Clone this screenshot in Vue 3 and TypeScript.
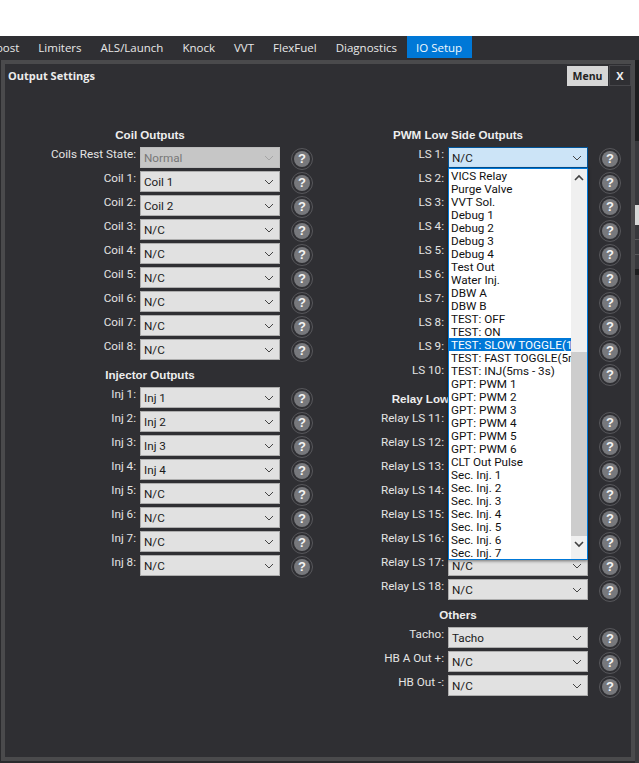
<script setup lang="ts">
import { computed } from 'vue'

interface Row {
  heading?: string
  label?: string
  value?: string
  disabled?: boolean
  open?: boolean
}

const tabs = ['Boost', 'Limiters', 'ALS/Launch', 'Knock', 'VVT', 'FlexFuel', 'Diagnostics', 'IO Setup']

const series = (prefix: string, from: number, to: number, values: string[] = []): Row[] => {
  const rows: Row[] = []
  for (let i = from; i <= to; i++) {
    rows.push({ label: `${prefix} ${i}:`, value: values[i - from] ?? 'N/C' })
  }
  return rows
}

const leftRows: Row[] = [
  { heading: 'Coil Outputs' },
  { label: 'Coils Rest State:', value: 'Normal', disabled: true },
  ...series('Coil', 1, 8, ['Coil 1', 'Coil 2']),
  { heading: 'Injector Outputs' },
  ...series('Inj', 1, 8, ['Inj 1', 'Inj 2', 'Inj 3', 'Inj 4']),
]

const rightRows = computed<Row[]>(() => {
  const ls = series('LS', 1, 10)
  ls[0].open = true
  return [
    { heading: 'PWM Low Side Outputs' },
    ...ls,
    { heading: 'Relay Low Side Outputs' },
    ...series('Relay LS', 11, 18),
    { heading: 'Others' },
    { label: 'Tacho:', value: 'Tacho' },
    { label: 'HB A Out +:', value: 'N/C' },
    { label: 'HB Out -:', value: 'N/C' },
  ]
})

const columns = computed(() => [leftRows, rightRows.value])

const options = [
  'VICS Relay', 'Purge Valve', 'VVT Sol.', 'Debug 1', 'Debug 2', 'Debug 3', 'Debug 4', 'Test Out',
  'Water Inj.', 'DBW A', 'DBW B', 'TEST: OFF', 'TEST: ON', 'TEST: SLOW TOGGLE(1s)', 'TEST: FAST TOGGLE(5ms)',
  'TEST: INJ(5ms - 3s)', 'GPT: PWM 1', 'GPT: PWM 2', 'GPT: PWM 3', 'GPT: PWM 4', 'GPT: PWM 5', 'GPT: PWM 6',
  'CLT Out Pulse', 'Sec. Inj. 1', 'Sec. Inj. 2', 'Sec. Inj. 3', 'Sec. Inj. 4', 'Sec. Inj. 5', 'Sec. Inj. 6', 'Sec. Inj. 7',
]
const selected = 'TEST: SLOW TOGGLE(1s)'
</script>

<template>
  <div class="page">
    <div class="topgap"></div>
    <nav class="tabs">
      <span v-for="t in tabs" :key="t" class="tab" :class="{ active: t === 'IO Setup' }">{{ t }}</span>
    </nav>
    <div class="body">
      <section class="panel">
        <header class="titlebar">
          <span class="title">Output Settings</span>
          <button class="menu">Menu</button>
          <button class="close">X</button>
        </header>
        <div class="form">
          <div v-for="(rows, c) in columns" :key="c" class="col">
            <template v-for="(r, i) in rows" :key="i">
              <div v-if="r.heading" class="heading">{{ r.heading }}</div>
              <div v-else class="row">
                <span class="label">{{ r.label }}</span>
                <div class="select" :class="{ disabled: r.disabled, focused: r.open }">
                  <span class="value">{{ r.value }}</span>
                  <svg class="chev" width="10" height="6" viewBox="0 0 10 6">
                    <path d="M1 1 L5 5 L9 1" fill="none" stroke="currentColor" stroke-width="1" />
                  </svg>
                  <div v-if="r.open" class="dropdown">
                    <ul class="list">
                      <li v-for="o in options" :key="o" :class="{ sel: o === selected }">{{ o }}</li>
                    </ul>
                    <div class="scrollbar">
                      <svg class="arrow" width="16" height="17" viewBox="0 0 16 17">
                        <path d="M4 11 L8 7 L12 11" fill="none" stroke="#404040" stroke-width="1.6" />
                      </svg>
                      <div class="track"></div>
                      <div class="thumb"></div>
                      <svg class="arrow" width="16" height="17" viewBox="0 0 16 17">
                        <path d="M4 6 L8 10 L12 6" fill="none" stroke="#404040" stroke-width="1.6" />
                      </svg>
                    </div>
                  </div>
                </div>
                <span class="help"><span class="help-in">?</span></span>
              </div>
            </template>
          </div>
        </div>
      </section>
      <aside class="behind">
        <div class="b-dark"></div>
        <div class="b-mid1"></div>
        <div class="b-light"></div>
        <div class="b-mid2"></div>
        <div class="b-line"></div>
        <div class="b-mid2"></div>
        <div class="b-line"></div>
        <div class="b-mid2"></div>
        <div class="b-dark2"></div>
      </aside>
    </div>
  </div>
</template>

<style scoped>
.page {
  width: 639px;
  height: 763px;
  overflow: hidden;
  display: flex;
  flex-direction: column;
  background: #2a2a2d;
  font-family: Roboto, "Liberation Sans", sans-serif;
  font-size: 11.7px;
  color: #e6e6e6;
}
.topgap {
  height: 36px;
  background: #fff;
  flex: none;
}
.tabs {
  height: 24px;
  flex: none;
  display: flex;
  background: #2f2f33;
  overflow: hidden;
  margin-left: -21px;
}
.tab {
  height: 22px;
  line-height: 23px;
  padding: 0 9.5px;
  font-family: "Open Sans", sans-serif;
  font-size: 11.5px;
  color: #e8e8e8;
  white-space: nowrap;
}
.tab.active {
  background: #0078d7;
  color: #f2f8fd;
  padding: 0 9.5px;
}
.body {
  flex: 1;
  display: flex;
  min-height: 0;
}
.panel {
  margin-left: 1px;
  width: 634px;
  height: 701px;
  box-sizing: border-box;
  border: 4px solid #4a4a4c;
  background: #2f2f33;
  flex: none;
  display: flex;
  flex-direction: column;
}
.titlebar {
  display: flex;
  align-items: center;
  height: 22px;
  padding: 1px 0 0 3px;
  box-sizing: border-box;
}
.title {
  font-family: "Open Sans", sans-serif;
  font-weight: 700;
  font-size: 11px;
  color: #ececec;
  margin-right: auto;
}
.menu {
  width: 41px;
  height: 20px;
  border: 0;
  padding: 0;
  background: #d6d6d6;
  color: #222;
  font-family: "Open Sans", sans-serif;
  font-weight: 700;
  font-size: 10.5px;
  margin-right: 1px;
}
.close {
  width: 22px;
  height: 21px;
  box-sizing: border-box;
  border: 1px solid #46464a;
  padding: 0;
  background: #2f2f33;
  color: #f0f0f0;
  font-family: "Open Sans", sans-serif;
  font-weight: 700;
  font-size: 11px;
}
.form {
  display: flex;
  gap: 35px;
  padding: 37px 0 0 35px;
}
.col {
  width: 273px;
  flex: none;
}
.heading {
  width: 220px;
  height: 24px;
  line-height: 24px;
  text-align: center;
  font-family: "Liberation Sans", sans-serif;
  font-weight: 700;
  font-size: 11.6px;
  color: #eee;
  white-space: nowrap;
}
.row {
  display: flex;
  height: 24px;
}
.label {
  width: 96px;
  margin-right: 4px;
  text-align: right;
  line-height: 14px;
  white-space: nowrap;
  color: #e4e4e4;
}
.select {
  position: relative;
  width: 140px;
  height: 21px;
  box-sizing: border-box;
  border: 1px solid #adadad;
  background: #e1e1e1;
  color: #1a1a1a;
  display: flex;
  align-items: center;
  justify-content: space-between;
  padding: 1px 5px 0 3px;
}
.select.disabled {
  background: #c6c6c6;
  border-color: #bcbcbc;
  color: #777;
}
.select.disabled .chev {
  color: #a5a5a5;
}
.select.focused {
  background: #cce4f7;
  border-color: #005499;
}
.chev {
  color: #444;
}
.dropdown {
  position: absolute;
  top: 20px;
  left: -1px;
  width: 140px;
  height: 392px;
  box-sizing: border-box;
  border: 1px solid #0078d7;
  background: #fff;
  display: flex;
  z-index: 5;
  box-shadow: 0 1px 3px rgba(0, 0, 0, 0.5);
}
.list {
  list-style: none;
  margin: 0;
  padding: 0;
  width: 122px;
  overflow: hidden;
  color: #111;
}
.list li {
  height: 13px;
  line-height: 14px;
  padding-left: 2px;
  white-space: nowrap;
}
.list li.sel {
  background: #0078d7;
  color: #fff;
}
.scrollbar {
  width: 16px;
  background: #f0f0f0;
  display: flex;
  flex-direction: column;
}
.arrow {
  flex: none;
}
.track {
  height: 166px;
  flex: none;
}
.thumb {
  height: 184px;
  flex: none;
  background: #cdcdcd;
}
.help {
  width: 22px;
  height: 22px;
  margin: 1px 0 0 11px;
  box-sizing: border-box;
  border: 1.5px solid #57575b;
  border-radius: 50%;
  display: flex;
  align-items: center;
  justify-content: center;
  flex: none;
}
.help-in {
  width: 16px;
  height: 16px;
  border-radius: 50%;
  background: #77787c;
  color: #f4f4f4;
  font-family: "Liberation Sans", sans-serif;
  font-weight: 700;
  font-size: 13px;
  line-height: 16px;
  text-align: center;
}
.behind {
  width: 4px;
  flex: none;
  display: flex;
  flex-direction: column;
  background: #3a3a3d;
}
.b-dark {
  height: 81px;
  background: #1d1d1f;
}
.b-mid1 {
  height: 64px;
  background: #38383c;
}
.b-light {
  height: 20px;
  background: #d8d8d8;
}
.b-mid2 {
  height: 14px;
  background: #38383c;
}
.b-line {
  height: 1px;
  background: #5a5a5c;
}
.b-dark2 {
  height: 6px;
  background: #1d1d1f;
}
</style>
